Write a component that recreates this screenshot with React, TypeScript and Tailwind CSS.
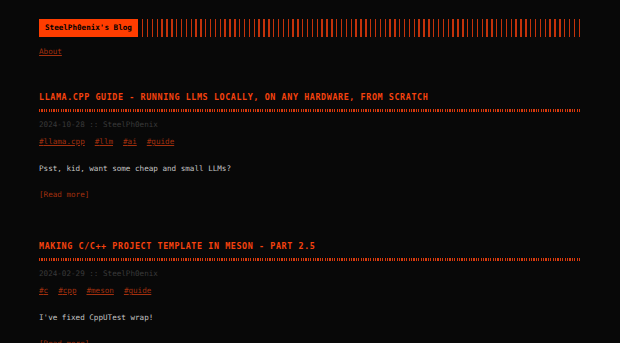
import React from 'react';

interface Post {
  title: string;
  date: string;
  tags: string[];
  summary: string;
}

const posts: Post[] = [
  {
    title: 'llama.cpp guide - Running LLMs locally, on any hardware, from scratch',
    date: '2024-10-28',
    tags: ['llama.cpp', 'llm', 'ai', 'guide'],
    summary: 'Psst, kid, want some cheap and small LLMs?',
  },
  {
    title: 'Making C/C++ project template in Meson - part 2.5',
    date: '2024-02-29',
    tags: ['c', 'cpp', 'meson', 'guide'],
    summary: "I've fixed CppUTest wrap!",
  },
];

function PostCard({ post, first }: { post: Post; first: boolean }) {
  return (
    <article className={first ? 'mt-[33px]' : 'mt-[39px]'}>
      <h1 className="text-[8.4px] leading-[12px] font-bold uppercase tracking-[0.6px] text-[#f5420e]">
        {post.title}
      </h1>
      <div className="mt-[6px] h-[3px] w-full bg-[repeating-linear-gradient(90deg,#d8390c_0,#d8390c_1.2px,transparent_1.2px,transparent_2.4px)]" />
      <div className="mt-[7px] leading-[12px] text-[#3a3a3a]">
        {post.date} :: SteelPh0enix
      </div>
      <div className="mt-[5px] flex gap-[10px] leading-[12px]">
        {post.tags.map((tag) => (
          <a key={tag} href="#" className="text-[#a3300e] underline underline-offset-[1px]">
            #{tag}
          </a>
        ))}
      </div>
      <p className="mt-[15px] leading-[12px] text-[#c4c4c4]">{post.summary}</p>
      <a href="#" className="mt-[14px] block leading-[12px] text-[#a3300e]">
        [Read more]
      </a>
    </article>
  );
}

export default function App() {
  return (
    <div className="h-[343px] overflow-hidden bg-[#080808] px-[39px] pt-[19px] text-[7.6px] font-['DejaVu_Sans_Mono',monospace]">
      <header className="flex h-[18px] items-stretch">
        <a
          href="#"
          className="flex items-center bg-[#ff3d00] px-[6px] font-bold text-black"
        >
          SteelPh0enix's Blog
        </a>
        <div className="ml-[4px] flex-1 bg-[repeating-linear-gradient(90deg,#c4320a_0,#c4320a_1.4px,transparent_1.4px,transparent_4.85px)]" />
      </header>
      <nav className="mt-[9px] leading-[12px]">
        <a href="#" className="text-[#a3300e] underline underline-offset-[1px]">
          About
        </a>
      </nav>
      {posts.map((post, i) => (
        <PostCard key={post.title} post={post} first={i === 0} />
      ))}
    </div>
  );
}
